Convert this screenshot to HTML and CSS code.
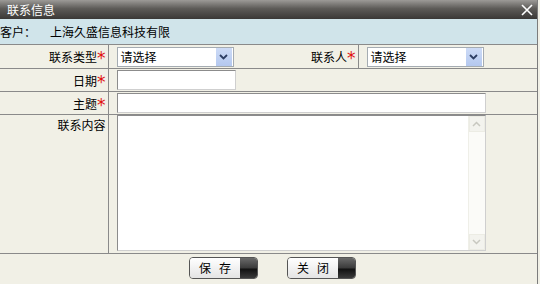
FILE: index.html
```html
<!DOCTYPE html>
<html>
<head>
<meta charset="utf-8">
<link rel="stylesheet" href="styles.css">
</head>
<body>
<div class="dlg">
  <div class="titlebar">
    <span class="title">联系信息</span>
    <span class="close">
      <svg width="12" height="12" viewBox="0 0 12 12"><path d="M1 1L11 11M11 1L1 11" stroke="#fff" stroke-width="1.6" fill="none"/></svg>
    </span>
  </div>
  <div class="cust"><span class="ck">客户：</span><span class="cv">上海久盛信息科技有限</span></div>
  <table class="form">
    <colgroup><col class="c1"><col class="c2"><col class="c3"><col class="c4"></colgroup>
    <tr class="r1">
      <td class="lab">联系类型<i>*</i></td>
      <td class="val"><div class="sel"><span>请选择</span><b class="arr"><svg width="9" height="6" viewBox="0 0 9 6"><path d="M1 1L4.5 4.5L8 1" stroke="#2d3e63" stroke-width="1.8" fill="none"/></svg></b></div></td>
      <td class="lab lab2">联系人<i>*</i></td>
      <td class="val"><div class="sel"><span>请选择</span><b class="arr"><svg width="9" height="6" viewBox="0 0 9 6"><path d="M1 1L4.5 4.5L8 1" stroke="#2d3e63" stroke-width="1.8" fill="none"/></svg></b></div></td>
    </tr>
    <tr class="r2">
      <td class="lab">日期<i>*</i></td>
      <td class="val" colspan="3"><div class="inp short"></div></td>
    </tr>
    <tr class="r3">
      <td class="lab">主题<i>*</i></td>
      <td class="val" colspan="3"><div class="inp long"></div></td>
    </tr>
    <tr class="r4">
      <td class="lab top">联系内容</td>
      <td class="val top" colspan="3">
        <div class="ta">
          <div class="sb">
            <div class="sbtn"><svg width="9" height="6" viewBox="0 0 9 6"><path d="M1 5L4.5 1.5L8 5" stroke="#c8c8c0" stroke-width="1.5" fill="none"/></svg></div>
            <div class="strack"></div>
            <div class="sbtn"><svg width="9" height="6" viewBox="0 0 9 6"><path d="M1 1L4.5 4.5L8 1" stroke="#c8c8c0" stroke-width="1.5" fill="none"/></svg></div>
          </div>
        </div>
      </td>
    </tr>
  </table>
  <div class="btns">
    <div class="btn"><span class="bt">保存</span><span class="bd"></span></div>
    <div class="btn"><span class="bt">关闭</span><span class="bd"></span></div>
  </div>
</div>
</body>
</html>
```
FILE: styles.css
```css
html, body { margin: 0; padding: 0; }
body {
  width: 540px; height: 284px; overflow: hidden;
  background: #f1f0e6;
  font-family: "Noto Sans CJK SC", "DejaVu Sans", sans-serif;
  font-size: 12px; color: #000;
}
.dlg { width: 538px; border-right: 1px solid #7c7c7c; height: 284px; box-sizing: border-box; }
.titlebar {
  height: 19px;
  background: linear-gradient(#9c9a97, #5d5b58 45%, #3a3836);
  display: flex; align-items: center; justify-content: space-between;
  color: #fff; font-size: 12px;
}
.title { padding-left: 7px; line-height: 19px; }
.close { width: 12px; height: 12px; margin-right: 4px; display: flex; }
.cust {
  height: 26px; background: #d0e4ea; line-height: 25px;
  border-bottom: 1px solid #8a8a8a; box-sizing: border-box;
}
.cv { margin-left: 14px; }
.form { border-collapse: collapse; width: 537px; table-layout: fixed; }
.c1 { width: 108px; } .c2 { width: 150px; } .c3 { width: 100px; } .c4 { width: 179px; }
.form td { border-bottom: 1px solid #8a8a8a; padding: 0; }
.lab { text-align: right; padding-right: 2px !important; border-right: 1px solid #8a8a8a; white-space: nowrap; }
.lab i { color: #e01010; font-style: normal; font-size: 17px; line-height: 10px; position: relative; top: 2px; font-family: "DejaVu Sans", sans-serif; }
.val { padding-left: 8px !important; }
.r1 td { height: 23px; }
.r2 td { height: 22px; }
.r3 td { height: 22px; }
.r4 td { height: 137px; }
.top { vertical-align: top; }
.lab.top { padding-top: 1px !important; }
.sel {
  width: 117px; height: 20px; border: 1px solid #a5acb2; background: #fff;
  display: flex; align-items: center; justify-content: space-between; box-sizing: border-box;
}
.sel span { padding-left: 3px; }
.arr {
  width: 16px; height: 18px; background: linear-gradient(#cddbf6, #b4c8ef);
  display: flex; align-items: center; justify-content: center; margin-right: 1px;
}
.inp { height: 20px; background: #fff; border: 1px solid #a0a0a0; border-color: #8c8c8c #cfcfcf #cfcfcf #8c8c8c; box-sizing: border-box; }
.short { width: 119px; }
.long { width: 369px; }
.ta {
  width: 369px; height: 136px; background: #fff;
  border: 1px solid #8c8c8c; border-color: #8c8c8c #cfcfcf #cfcfcf #8c8c8c; box-sizing: border-box;
  display: flex; justify-content: flex-end;
}
.sb { width: 16px; display: flex; flex-direction: column; background: #fbfbf8; border-left: 1px solid #efefe8; }
.sbtn { height: 16px; display: flex; align-items: center; justify-content: center; background: #f3f3ee; border: 1px solid #ececE4; box-sizing: border-box; }
.strack { flex: 1; }
.btns { display: flex; gap: 29px; padding-top: 3px; padding-left: 189px; }
.btn {
  width: 69px; height: 22px; border: 1px solid #555; border-radius: 4px; box-sizing: border-box;
  display: flex; overflow: hidden;
}
.bt {
  flex: 1; background: linear-gradient(#ffffff, #e4e4e4); text-align: center; line-height: 20px;
  font-size: 12px; letter-spacing: 8px; padding-left: 8px;
}
.bd { width: 17px; background: linear-gradient(#6a6a6a, #3a3a3a 50%, #111 55%, #3a3a3a); }
```
